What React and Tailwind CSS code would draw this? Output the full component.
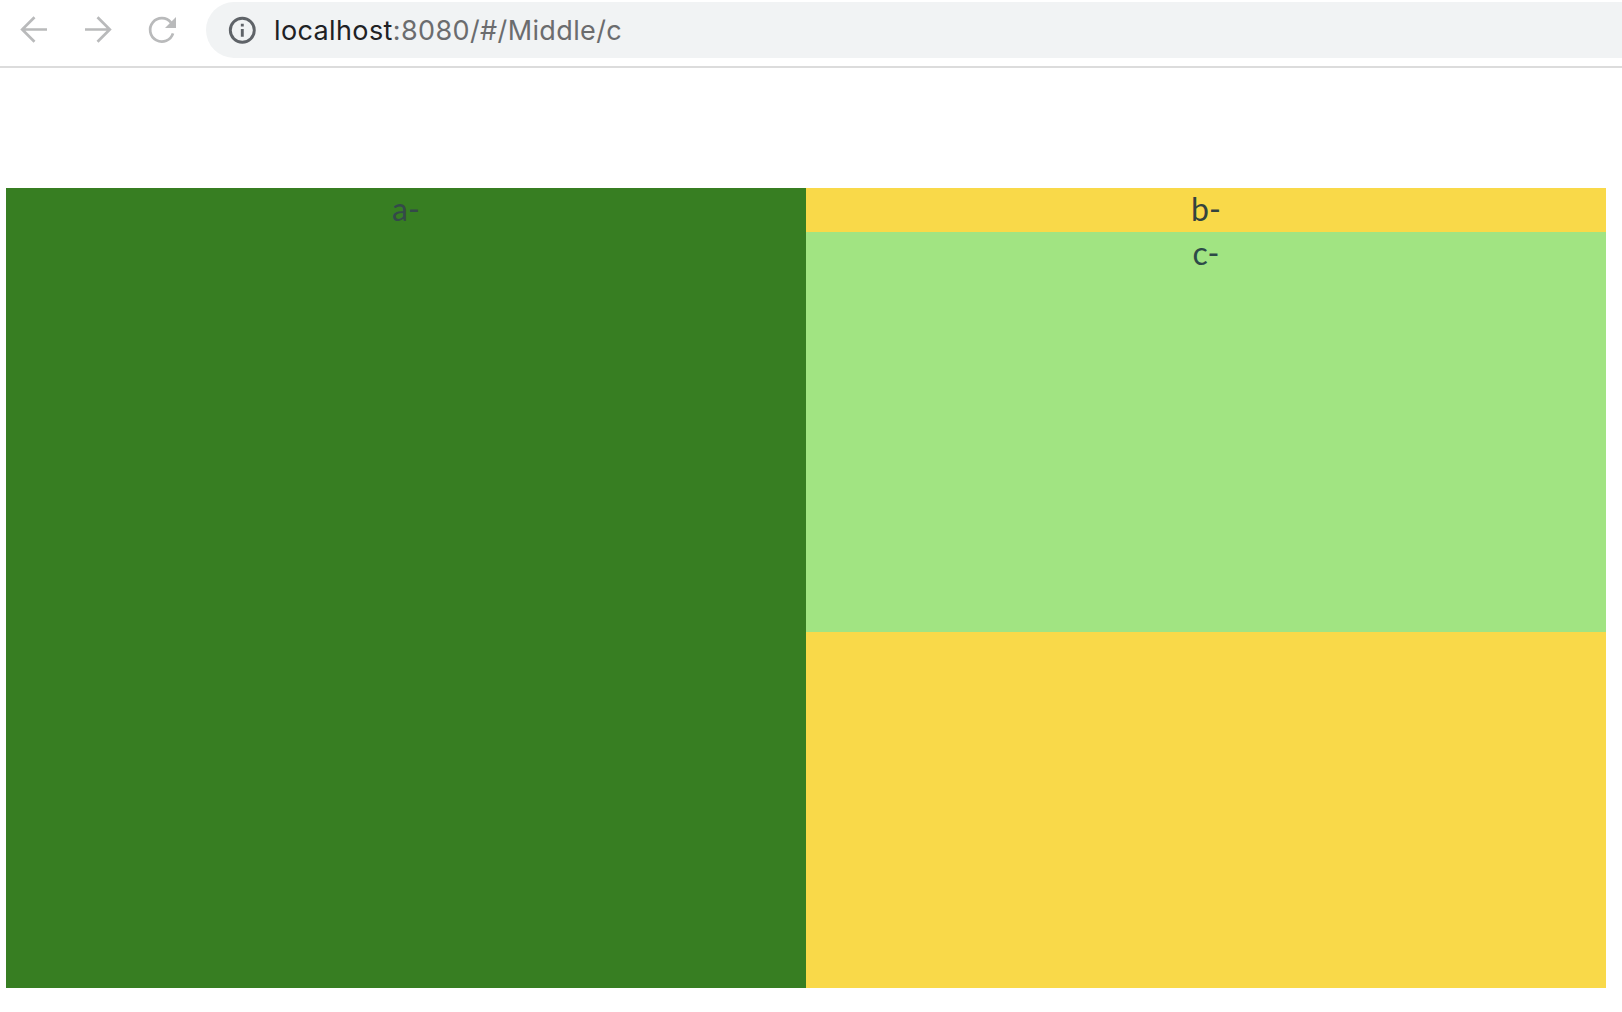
import React from "react";

function NavIcons() {
  return (
    <div className="flex w-[206px] shrink-0 items-start text-[#b9babb]">
      <svg className="h-[60px] w-[206px]" viewBox="0 0 206 60" fill="none" stroke="currentColor" strokeWidth="2.7">
        <path d="M47 29.5H22.5M34.5 17.2L22.2 29.5L34.5 41.8" />
        <path d="M85 29.5H109.5M97.5 17.2L109.8 29.5L97.5 41.8" />
        <path d="M171 22.6A11.7 11.7 0 1 0 173 33.3" />
        <path d="M176 17V28H165Z" fill="currentColor" stroke="none" />
      </svg>
    </div>
  );
}

function AddressBar() {
  return (
    <div className="mt-[2px] flex h-14 flex-1 items-center rounded-l-full bg-[#f1f3f4] pl-[22px]">
      <svg className="h-7 w-7 shrink-0" viewBox="0 0 28 28" fill="none">
        <circle cx="14.3" cy="14.3" r="12" stroke="#5f6368" strokeWidth="2.9" />
        <path d="M14.3 13V20.7M14.3 7.8V10.6" stroke="#5f6368" strokeWidth="2.9" />
      </svg>
      <div className="ml-[18px] mt-[2px] whitespace-nowrap font-['Inter',sans-serif] text-[27px] leading-[50px] tracking-[0.38px] text-[#6b6c6e]">
        <span className="text-[#202124]">localhost</span>:8080/#/Middle/c
      </div>
    </div>
  );
}

export default function App() {
  return (
    <div className="h-[1012px] w-full overflow-hidden bg-white">
      <header className="flex h-[68px] border-b-2 border-[#dcdcdc]">
        <NavIcons />
        <AddressBar />
      </header>
      <main className="ml-[6px] mt-[120px] flex h-[800px] w-[1600px] text-center font-['Lato',sans-serif] text-[32px] leading-[42px] text-[#2c3e50]">
        <section className="w-[800px] bg-[#377e22] text-[#34494a]">a-</section>
        <section className="w-[800px] bg-[#f9d949] text-[#34433f]">
          <div className="h-11">b-</div>
          <div className="h-[400px] bg-[#a1e482] text-[#2d4a48]">c-</div>
        </section>
      </main>
    </div>
  );
}
